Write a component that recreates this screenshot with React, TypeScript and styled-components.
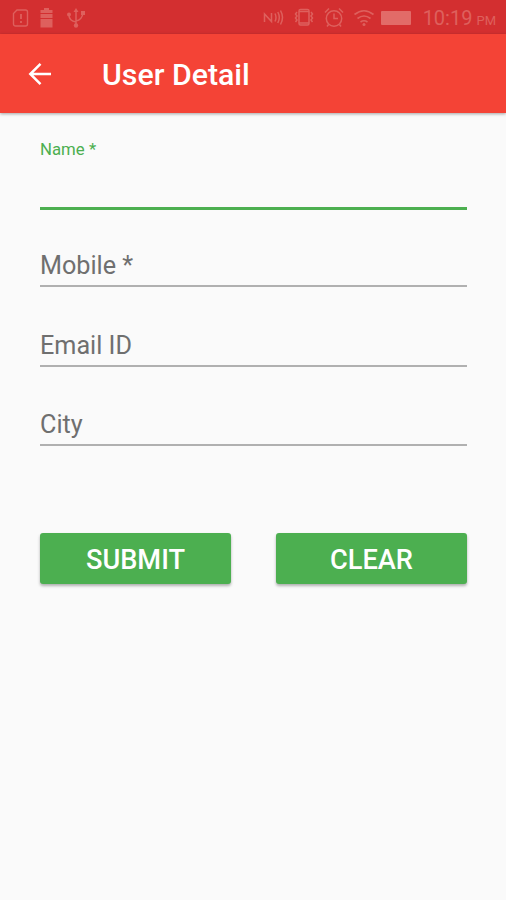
import React, { useState } from "react";
import styled, { createGlobalStyle } from "styled-components";

const GlobalStyle = createGlobalStyle`
  *, *::before, *::after { box-sizing: border-box; }
  body { margin: 0; background: #fafafa; font-family: Roboto, sans-serif; }
`;

const Screen = styled.div`
  display: flex;
  flex-direction: column;
  width: 100%;
  min-height: 900px;
  background: #fafafa;
`;

const StatusBar = styled.header`
  display: flex;
  justify-content: space-between;
  align-items: center;
  height: 34px;
  padding: 1px 10px 0 12px;
  background: #d32f30;
  color: #de605d;
`;

const StatusGroup = styled.div<{ $gap: number }>`
  display: flex;
  align-items: center;
  gap: ${(p) => p.$gap}px;

  svg { display: block; }
`;

const Battery = styled.span`
  width: 30px;
  height: 14px;
  margin-left: -3px;
  border-radius: 1px;
  background: #e26b68;
`;

const Clock = styled.time`
  display: flex;
  align-items: baseline;
  gap: 4px;
  margin: 3px 0 0 2px;
  font-size: 20px;
  line-height: 24px;
  white-space: nowrap;
`;

const Meridiem = styled.span`
  font-size: 13px;
`;

const AppBar = styled.div`
  display: flex;
  align-items: center;
  height: 79px;
  padding: 0 24px;
  background: #f44336;
  color: #fff;
  box-shadow: 0 1px 3px rgba(0, 0, 0, 0.35);
`;

const BackButton = styled.button`
  display: grid;
  place-items: center;
  width: 32px;
  height: 32px;
  padding: 0;
  border: 0;
  background: none;
  color: inherit;
`;

const Title = styled.h1`
  margin: 3px 0 0 46px;
  font-size: 30.3px;
  font-weight: 500;
  line-height: 36px;
`;

const Form = styled.form`
  display: flex;
  flex-direction: column;
  padding: 23px 39px 0 40px;
`;

const Field = styled.label<{ $focused: boolean }>`
  display: flex;
  flex-direction: column;
  justify-content: ${(p) => (p.$focused ? "flex-start" : "flex-end")};
  height: ${(p) => (p.$focused ? 74 : 79.3)}px;
  margin-bottom: ${(p) => (p.$focused ? -2 : 0)}px;
  border-bottom: ${(p) => (p.$focused ? "3px solid #4caf50" : "2px solid #b0b0b0")};
`;

const FieldLabel = styled.span<{ $focused: boolean }>`
  padding-bottom: ${(p) => (p.$focused ? 0 : 4)}px;
  color: ${(p) => (p.$focused ? "#4caf50" : "#6f6f6f")};
  font-size: ${(p) => (p.$focused ? 16.8 : 25.2)}px;
  line-height: ${(p) => (p.$focused ? 26 : 30)}px;
`;

const Actions = styled.div`
  display: grid;
  grid-template-columns: 1fr 1fr;
  gap: 45px;
  margin-top: 87.1px;
`;

const ActionButton = styled.button`
  height: 51px;
  padding: 3px 0 0;
  border: 0;
  border-radius: 3px;
  background: #4caf50;
  box-shadow: 0 2px 3px rgba(0, 0, 0, 0.3);
  color: #fff;
  font: 500 27.2px/32px Roboto, sans-serif;
`;

const SimIcon = () => (
  <svg width="17" height="18" viewBox="0 0 17 18" fill="none" stroke="currentColor" strokeWidth="1.4">
    <path d="M5 1h8.5a2 2 0 0 1 2 2v12a2 2 0 0 1-2 2H3.500a2 2 0 0 1-2-2V4.500Z" />
    <path d="M9 5v5M9 12v2" strokeWidth="1.800" />
  </svg>
);

const BatteryAlertIcon = () => (
  <svg width="13" height="20" viewBox="0 0 13 20" fill="currentColor">
    <path d="M4 0h5v2h3.500v3H.5V2H4ZM.5 6h12v4H.5ZM.5 11h12v8.500H.5Z" />
  </svg>
);

const UsbIcon = () => (
  <svg width="24" height="20" viewBox="-3 0 24 20" fill="none" stroke="currentColor" strokeWidth="1.5">
    <path d="M9 17V3M9 14Q2 13 2 7M9 13q6-1 7-8" />
    <path d="m9 0 2.500 4h-5Z" fill="currentColor" stroke="none" />
    <g fill="currentColor" stroke="none">
      <circle cx="9" cy="17.500" r="2.200" />
      <circle cx="2" cy="6.500" r="2" />
      <path d="M14 3h4v4h-4Z" />
    </g>
  </svg>
);

const NfcIcon = () => (
  <svg width="21" height="17" viewBox="0 0 21 17" fill="none" stroke="currentColor" strokeWidth="1.500">
    <path d="M1.500 13V5l7 7.500V4M12 4.500q2 4 0 8M14.800 3q3 5.500 0 11M17.500 1.500q4 7 0 14" />
  </svg>
);

const VibrateIcon = () => (
  <svg width="20" height="19" viewBox="0 0 20 19" fill="none" stroke="currentColor" strokeWidth="1.500">
    <rect x="5" y="1.500" width="10" height="15.500" rx="1.500" />
    <path d="M5 3.500h10M5 15h10M3 4 1.500 6 3 8 1.500 10 3 12 1.500 14M17 4l1.500 2L17 8l1.500 2-1.500 2 1.500 2" />
  </svg>
);

const AlarmIcon = () => (
  <svg width="20" height="21" viewBox="0 0 20 21" fill="none" stroke="currentColor" strokeWidth="1.500">
    <circle cx="10" cy="11.500" r="7.700" />
    <path d="M10 6.500v5h4M1 5.500 5 1.500M19 5.500 15 1.500M4.500 17.500 3 19.500M15.500 17.500l1.500 2" />
  </svg>
);

const WifiIcon = () => (
  <svg width="20" height="18" viewBox="0 0 20 18" fill="none" stroke="currentColor" strokeWidth="1.600">
    <path d="M.5 5.500Q10-2 19.500 5.500M3.500 9.500q6.500-5 13 0M6.500 13q3.500-2.500 7 0" />
    <circle cx="10" cy="15.500" r="1.500" fill="currentColor" stroke="none" />
  </svg>
);

const BackIcon = () => (
  <svg width="24" height="24" viewBox="0 0 24 24" fill="none" stroke="#fff" strokeWidth="2.500">
    <path d="M23 12H2.500M12.500 1.800 2.300 12l10.200 10.200" />
  </svg>
);

const FIELDS = ["Name *", "Mobile *", "Email ID", "City"];

export default function App() {
  const [focused] = useState("Name *");

  return (
    <>
      <GlobalStyle />
      <Screen>
        <StatusBar>
          <StatusGroup $gap={11}>
            <SimIcon />
            <BatteryAlertIcon />
            <UsbIcon />
          </StatusGroup>
          <StatusGroup $gap={10}>
            <NfcIcon />
            <VibrateIcon />
            <AlarmIcon />
            <WifiIcon />
            <Battery />
            <Clock>
              10:19 <Meridiem>PM</Meridiem>
            </Clock>
          </StatusGroup>
        </StatusBar>
        <AppBar>
          <BackButton aria-label="Back">
            <BackIcon />
          </BackButton>
          <Title>User Detail</Title>
        </AppBar>
        <Form>
          {FIELDS.map((name) => (
            <Field key={name} $focused={name === focused}>
              <FieldLabel $focused={name === focused}>{name}</FieldLabel>
            </Field>
          ))}
          <Actions>
            <ActionButton type="button">SUBMIT</ActionButton>
            <ActionButton type="button">CLEAR</ActionButton>
          </Actions>
        </Form>
      </Screen>
    </>
  );
}
